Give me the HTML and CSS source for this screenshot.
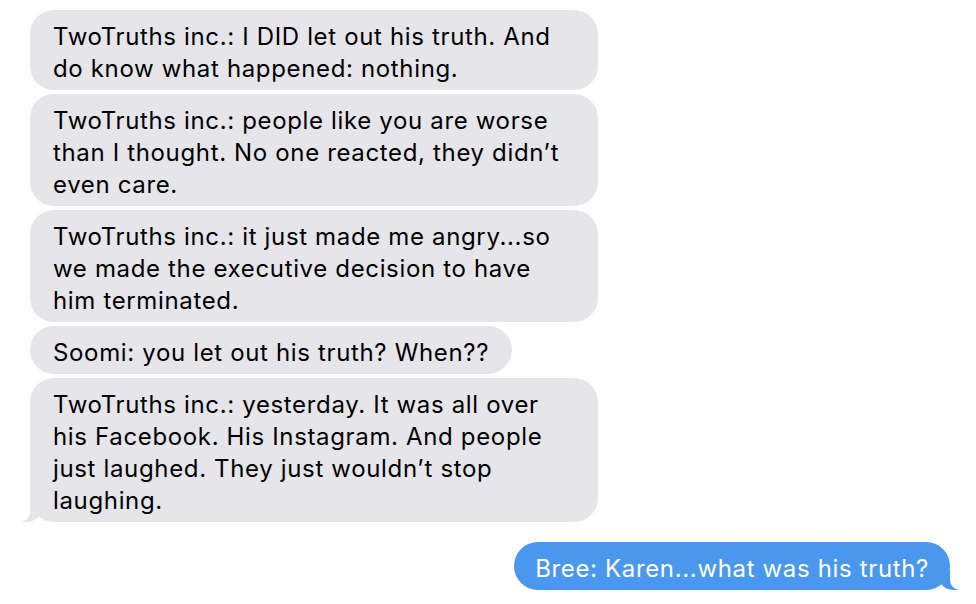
FILE: index.html
```html
<!DOCTYPE html>
<html lang="en">
<head>
  <meta charset="UTF-8">
  <meta name="viewport" content="width=device-width, initial-scale=1.0">
  <title>Messages</title>
  <link rel="stylesheet" href="styles.css">
</head>
<body>
  <div class="thread">
    <div class="bubble in">TwoTruths inc.: I DID let out his truth. And do know what happened: nothing.</div>
    <div class="bubble in">TwoTruths inc.: people like you are worse than I thought. No one reacted, they didn’t even care.</div>
    <div class="bubble in">TwoTruths inc.: it just made me angry...so we made the executive decision to have him terminated.</div>
    <div class="bubble in">Soomi: you let out his truth? When??</div>
    <div class="bubble in tail">TwoTruths inc.: yesterday. It was all over his Facebook. His Instagram. And people just laughed. They just wouldn’t stop laughing.</div>
    <div class="bubble out tail">Bree: Karen...what was his truth?</div>
  </div>
</body>
</html>
```

FILE: styles.css
```css
body {
  margin: 0;
  background: #fff;
  font-family: Inter, "Noto Sans", sans-serif;
}
.thread {
  display: flex;
  flex-direction: column;
  gap: 4px;
  padding: 10px 26px 0 30px;
}
.bubble {
  position: relative;
  max-width: 568px;
  box-sizing: border-box;
  padding: 11px 23px 5px;
  border-radius: 24px;
  font-size: 24px;
  line-height: 32px;
  letter-spacing: 0.65px;
}
.in {
  align-self: flex-start;
  background: #e5e5ea;
  color: #000;
}
.out {
  align-self: flex-end;
  margin-top: 16px;
  background: #4a98ee;
  color: #fff;
  padding: 11px 21px 5px;
}
.tail::before,
.tail::after {
  content: "";
  position: absolute;
  bottom: 0;
  height: 20px;
}
.in.tail::before {
  left: -8px;
  width: 20px;
  background: #e5e5ea;
  border-bottom-right-radius: 15px;
}
.in.tail::after {
  left: -10px;
  width: 10px;
  background: #fff;
  border-bottom-right-radius: 10px;
}
.out.tail::before {
  right: -8px;
  width: 20px;
  background: #4a98ee;
  border-bottom-left-radius: 15px;
}
.out.tail::after {
  right: -10px;
  width: 10px;
  background: #fff;
  border-bottom-left-radius: 10px;
}
```
